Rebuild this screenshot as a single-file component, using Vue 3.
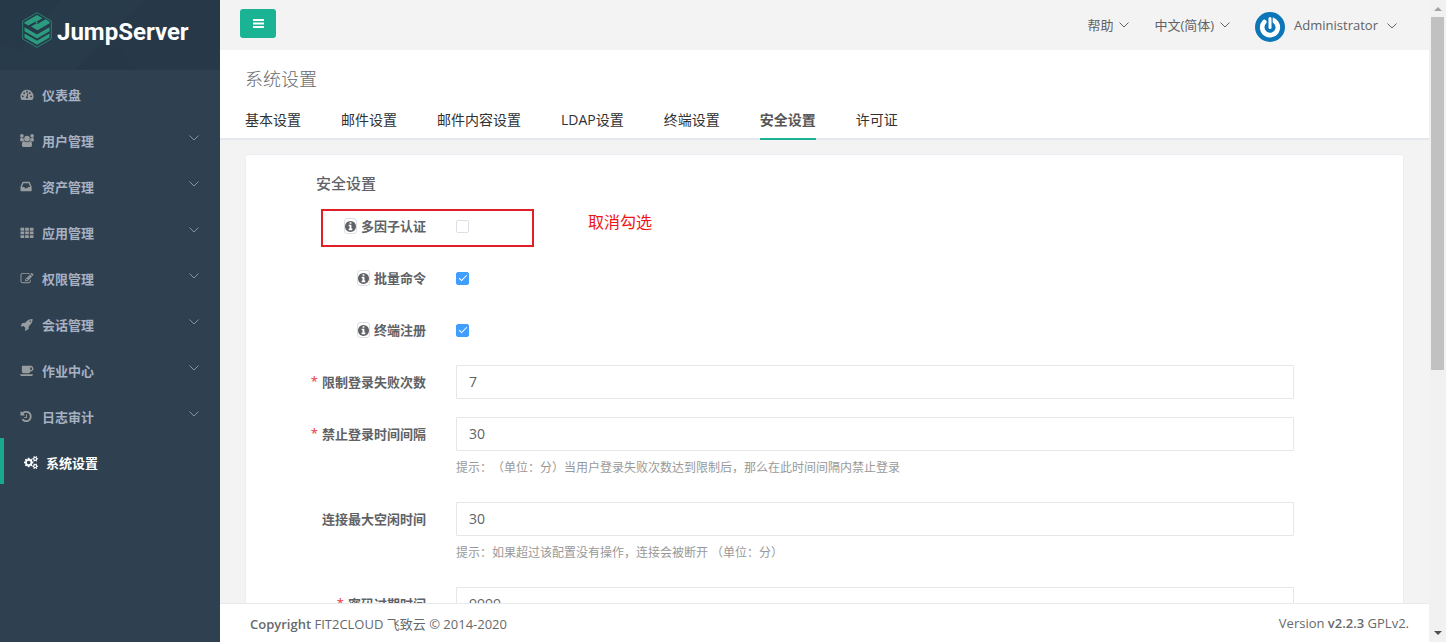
<script setup>
import { ref } from 'vue'

const icons = {
  dashboard: {
    box: '0 0 1792 1792',
    d: 'M896 256a896 896 0 0 0-758 1373q19 35 59 35h1398q40 0 59-35A896 896 0 0 0 896 256zM320 1024a128 128 0 1 1 0 256 128 128 0 0 1 0-256zM512 576a128 128 0 1 1 0 256 128 128 0 0 1 0-256zM896 384a128 128 0 1 1 0 256 128 128 0 0 1 0-256zM1280 576a128 128 0 1 1 0 256 128 128 0 0 1 0-256zM1472 1024a128 128 0 1 1 0 256 128 128 0 0 1 0-256zM1034 731q24 6 38 29t8 49l-101 382q60 45 60 125a150 150 0 1 1-183-158l101-382q7-26 29-39t48-6z'
  },
  users: {
    box: '0 0 1920 1792',
    d: 'M512 256a256 256 0 1 0-256 256 256 256 0 0 0 256-256zM1920 256a256 256 0 1 0-256 256 256 256 0 0 0 256-256zM1344 640a384 384 0 1 0-768 0 384 384 0 0 0 768 0zM593 896q-162 5-265 128H194Q0 1024 0 864q0-353 124-353 6 0 44 21t98 42 119 21 132-23q-5 37-5 66 0 139 81 258zM1664 1533q0 120-73 190t-194 69H523q-121 0-194-69t-73-190q0-500 283-560 13 0 42 21 150 158 379 158t379-158q29-21 42-21 283 60 283 560zM1920 864q0 160-194 160h-134q-103-123-265-128 81-119 81-258 0-29-5-66 66 23 132 23t119-21 98-42 44-21q124 0 124 353z'
  },
  inbox: {
    box: '128 0 1792 1792',
    d: 'M1151 960h316q-1-3-2.5-8.5t-2.5-7.5l-212-496h-708l-212 496q-1 3-2.5 8.5t-2.5 7.5h316l95 192h320zm513 30v482q0 26-19 45t-45 19h-1408q-26 0-45-19t-19-45v-482q0-62 25-123l238-552q10-25 36.5-42t52.5-17h832q26 0 52.5 17t36.5 42l238 552q25 61 25 123z'
  },
  grid: {
    box: '0 0 1792 1792',
    d: 'M0 256h512v384H0zM640 256h512v384H640zM1280 256h512v384h-512zM0 768h512v384H0zM640 768h512v384H640zM1280 768h512v384h-512zM0 1280h512v384H0zM640 1280h512v384H640zM1280 1280h512v384h-512z'
  },
  edit: {
    box: '0 0 1792 1792',
    d: 'M888 1184l116-116-152-152-116 116v56h96v96h56zm440-720q-16-16-33 1l-350 350q-17 17-1 33t33-1l350-350q17-17 1-33zm80 594v190q0 119-84.5 203.5t-203.5 84.5h-832q-119 0-203.5-84.5t-84.5-203.5v-832q0-119 84.5-203.5t203.5-84.5h832q63 0 117 25 15 7 18 23 3 17-9 29l-49 49q-14 14-32 8-23-6-45-6h-832q-66 0-113 47t-47 113v832q0 66 47 113t113 47h832q66 0 113-47t47-113v-126q0-13 9-22l64-64q15-15 35-7t20 29zm-96-738l288 288-672 672h-288v-288zm444 132l-92 92-288-288 92-92q28-28 68-28t68 28l152 152q28 28 28 68t-28 68z'
  },
  rocket: {
    box: '0 0 1792 1792',
    d: 'M1440 448q0-40-28-68t-68-28-68 28-28 68 28 68 68 28 68-28 28-68zm224-288q0 249-75.5 430.5t-253.5 360.5q-81 80-195 176l-20 379q-2 16-16 26l-384 224q-7 4-16 4-12 0-23-9l-64-64q-13-14-8-32l85-276-281-281-276 85q-3 1-9 1-14 0-23-9l-64-64q-17-19-5-39l224-384q10-14 26-16l379-20q96-114 176-195 188-187 358-258t431-71q14 0 24 9.5t10 22.5z'
  },
  coffee: {
    box: '0 0 1920 1792',
    d: 'M1664 640q0-80-56-136t-136-56h-64v384h64q80 0 136-56t56-136zM0 1408h1792q0 106-75 181t-181 75H256q-106 0-181-75T0 1408zM1856 640q0 159-112.5 271.5T1472 1024h-64v32q0 92-66 158t-158 66H480q-92 0-158-66t-66-158V320q0-26 19-45t45-19h1152q159 0 271.5 112.5T1856 640z'
  },
  history: {
    box: '128 0 1792 1792',
    d: 'M1664 896q0 156-61 298t-164 245-245 164-298 61q-172 0-327-72.5t-264-204.5q-7-10-6.5-22.5t8.5-20.5l137-138q10-9 25-9 16 2 23 12 73 95 179 147t225 52q104 0 198.5-40.5t163.5-109.5 109.5-163.5 40.5-198.5-40.5-198.5-109.5-163.5-163.5-109.5-198.5-40.5q-98 0-188 35.5t-160 101.5l137 138q31 30 14 69-17 40-59 40h-448q-26 0-45-19t-19-45v-448q0-42 40-59 39-17 69 14l130 129q107-101 244.5-156.5t284.5-55.5q156 0 298 61t245 164 164 245 61 298zm-640-288v448q0 14-9 23t-23 9h-320q-14 0-23-9t-9-23v-64q0-14 9-23t23-9h224v-352q0-14 9-23t23-9h64q14 0 23 9t9 23z'
  },
  cogs: {
    box: '0 0 1920 1792',
    d: 'M896 896q0-106-75-181t-181-75-181 75-75 181 75 181 181 75 181-75 75-181zm768 512q0-52-38-90t-90-38-90 38-38 90q0 53 37.5 90.5t90.5 37.5 90.5-37.5 37.5-90.5zm0-1024q0-52-38-90t-90-38-90 38-38 90q0 53 37.5 90.5t90.5 37.5 90.5-37.5 37.5-90.5zm-384 421v185q0 10-7 19.5t-16 10.5l-155 24q-11 35-32 76 34 48 90 115 7 11 7 20 0 12-7 19-23 30-82.5 89.5t-78.5 59.5q-11 0-21-7l-115-90q-37 19-77 31-11 108-23 155-7 24-30 24h-186q-11 0-20-7.5t-10-17.5l-23-153q-34-10-75-31l-118 89q-7 7-20 7-11 0-21-8-144-133-144-160 0-9 7-19 10-14 41-53t47-61q-23-44-35-82l-152-24q-10-1-17-9.5t-7-19.5v-185q0-10 7-19.5t16-10.5l155-24q11-35 32-76-34-48-90-115-7-11-7-20 0-12 7-20 22-30 82-89t79-59q11 0 21 7l115 90q34-18 77-32 11-108 23-154 7-24 30-24h186q11 0 20 7.5t10 17.5l23 153q34 10 75 31l118-89q8-7 20-7 11 0 21 8 144 133 144 160 0 8-7 19-12 16-42 54t-45 60q23 48 34 82l152 23q10 2 17 10.5t7 19.5zm640 533v140q0 16-149 31-12 27-30 52 51 113 51 138 0 4-4 7-122 71-124 71-8 0-46-47t-52-68q-20 2-30 2t-30-2q-14 21-52 68t-46 47q-2 0-124-71-4-3-4-7 0-25 51-138-18-25-30-52-149-15-149-31v-140q0-16 149-31 13-29 30-52-51-113-51-138 0-4 4-7 4-2 35-20t59-34 30-16q8 0 46 46.5t52 67.5q20-2 30-2t30 2q51-71 92-112l6-2q4 0 124 70 4 3 4 7 0 25-51 138 17 23 30 52 149 15 149 31zm0-1024v140q0 16-149 31-12 27-30 52 51 113 51 138 0 4-4 7-122 71-124 71-8 0-46-47t-52-68q-20 2-30 2t-30-2q-14 21-52 68t-46 47q-2 0-124-71-4-3-4-7 0-25 51-138-18-25-30-52-149-15-149-31v-140q0-16 149-31 13-29 30-52-51-113-51-138 0-4 4-7 4-2 35-20t59-34 30-16q8 0 46 46.5t52 67.5q20-2 30-2t30 2q51-71 92-112l6-2q4 0 124 70 4 3 4 7 0 25-51 138 17 23 30 52 149 15 149 31z'
  }
}

const menu = [
  { text: '仪表盘', icon: 'dashboard' },
  { text: '用户管理', icon: 'users', sub: true },
  { text: '资产管理', icon: 'inbox', sub: true },
  { text: '应用管理', icon: 'grid', sub: true },
  { text: '权限管理', icon: 'edit', sub: true },
  { text: '会话管理', icon: 'rocket', sub: true },
  { text: '作业中心', icon: 'coffee', sub: true },
  { text: '日志审计', icon: 'history', sub: true },
  { text: '系统设置', icon: 'cogs', active: true }
]

const tabs = ['基本设置', '邮件设置', '邮件内容设置', 'LDAP设置', '终端设置', '安全设置', '许可证']
const activeTab = ref('安全设置')

const fields = ref([
  { id: 'mfa', label: '多因子认证', type: 'check', value: false, marked: true },
  { id: 'batch', label: '批量命令', type: 'check', value: true },
  { id: 'register', label: '终端注册', type: 'check', value: true },
  { id: 'limit', label: '限制登录失败次数', type: 'text', value: '7', required: true },
  {
    id: 'interval', label: '禁止登录时间间隔', type: 'text', value: '30', required: true,
    help: '提示：（单位：分）当用户登录失败次数达到限制后，那么在此时间间隔内禁止登录'
  },
  {
    id: 'idle', label: '连接最大空闲时间', type: 'text', value: '30',
    help: '提示：如果超过该配置没有操作，连接会被断开 （单位：分）'
  },
  { id: 'expire', label: '密码过期时间', type: 'text', value: '9999', required: true }
])
</script>

<template>
  <div class="app">
    <aside class="sidebar">
      <a class="brand" href="#">
        <svg class="brand-bg" viewBox="0 0 220 70" preserveAspectRatio="none" aria-hidden="true">
          <path d="M0 0h220v70H0z" fill="#273949" />
          <path d="M0 0h145l-35 35 26 35H0z" fill="#283b4b" />
          <path d="M110 35l26 35H75z" fill="#263848" />
          <path d="M0 0h60L20 50 0 42z" fill="#263949" />
        </svg>
        <svg class="brand-mark" viewBox="0 0 30 36" aria-hidden="true">
          <path d="M15 .7L29.300 9v18L15 35.300.7 27V9z" fill="none" stroke="#27836f" stroke-width="1" />
          <path d="M2.500 10.200L15 3l5.500 3.200-7.500 4.300 2.500 1.400 8-4.600 4 2.400v1.500L15.500 18.200 9 14.500l7-4-2-1.200-7.500 4.300-4-2z" fill="#2b9c80" />
          <path d="M2.500 15.300L15 22.500l12.500-7.200v4L15 26.500 2.500 19.300z" fill="#2b9c80" />
          <path d="M2.500 21.600L15 28.800l12.500-7.200v4L15 32.800 2.500 25.600z" fill="#2b9c80" />
        </svg>
        <span class="brand-name">JumpServer</span>
      </a>
      <nav>
        <a v-for="m in menu" :key="m.text" href="#" class="menu-item" :class="{ active: m.active }">
          <svg class="menu-icon" :viewBox="icons[m.icon].box" aria-hidden="true">
            <path :d="icons[m.icon].d" fill="currentColor" fill-rule="evenodd" />
          </svg>
          <span class="menu-text">{{ m.text }}</span>
          <svg v-if="m.sub" class="menu-arrow" viewBox="0 0 10 6" aria-hidden="true">
            <path d="M.5.5L5 5 9.500.5" fill="none" stroke="currentColor" />
          </svg>
        </a>
      </nav>
    </aside>

    <div class="main">
      <header class="topbar">
        <button type="button" class="toggle" aria-label="Menu">
          <svg viewBox="0 0 11 9" aria-hidden="true">
            <path d="M0 0h11v2H0zM0 3.500h11v2H0zM0 7h11v2H0z" fill="#fff" />
          </svg>
        </button>
        <div class="top-links">
          <button type="button" class="drop lang">
            帮助
            <svg class="chev" viewBox="0 0 10 6" aria-hidden="true"><path d="M.5.5L5 5 9.500.5" fill="none" stroke="currentColor" /></svg>
          </button>
          <button type="button" class="drop lang">
            中文(简体)
            <svg class="chev" viewBox="0 0 10 6" aria-hidden="true"><path d="M.5.5L5 5 9.500.5" fill="none" stroke="currentColor" /></svg>
          </button>
          <button type="button" class="drop user">
            <svg class="avatar" viewBox="0 0 30 30" aria-hidden="true">
              <circle cx="15" cy="15" r="15" fill="#0c76b8" />
              <path d="M16 7.600A7.800 7.800 0 1 1 9.300 10" fill="none" stroke="#fff" stroke-width="4.600" stroke-linecap="round" />
              <path d="M15 5v11" stroke="#0c76b8" stroke-width="5.400" stroke-linecap="round" />
              <path d="M15 6.500v9" stroke="#fff" stroke-width="3" stroke-linecap="round" />
            </svg>
            <span>Administrator</span>
            <svg class="chev" viewBox="0 0 10 6" aria-hidden="true"><path d="M.5.5L5 5 9.500.5" fill="none" stroke="currentColor" /></svg>
          </button>
        </div>
      </header>

      <section class="heading">
        <h1>系统设置</h1>
        <div class="tabs" role="tablist">
          <button
            v-for="t in tabs" :key="t" type="button" role="tab" class="tab"
            :class="{ active: t === activeTab }" :aria-selected="t === activeTab" @click="activeTab = t"
          >{{ t }}</button>
        </div>
      </section>

      <main class="content">
        <form class="card" @submit.prevent>
          <h2>安全设置</h2>
          <div v-for="f in fields" :key="f.id" class="row">
            <label class="label" :for="f.id">
              <span v-if="f.required" class="star">*</span>
              <span v-if="f.type === 'check'" class="info">
                <svg viewBox="128 128 1536 1536" aria-hidden="true">
                  <path fill="currentColor" d="M1152 1376v-160q0-14-9-23t-23-9h-96v-512q0-14-9-23t-23-9h-320q-14 0-23 9t-9 23v160q0 14 9 23t23 9h96v320h-96q-14 0-23 9t-9 23v160q0 14 9 23t23 9h448q14 0 23-9t9-23zm-128-896v-160q0-14-9-23t-23-9h-192q-14 0-23 9t-9 23v160q0 14 9 23t23 9h192q14 0 23-9t9-23zm640 416q0 209-103 385.5t-279.5 279.5-385.5 103-385.5-103-279.5-279.5-103-385.5 103-385.5 279.5-279.5 385.5-103 385.5 103 279.5 279.5 103 385.5z" />
                </svg>
              </span>
              {{ f.label }}
            </label>
            <div class="control">
              <div v-if="f.type === 'check'" class="check-line">
                <input :id="f.id" v-model="f.value" type="checkbox" class="check">
              </div>
              <input v-else :id="f.id" v-model="f.value" type="text" class="input">
              <p v-if="f.help" class="help">{{ f.help }}</p>
            </div>
            <template v-if="f.marked">
              <div class="mark"></div>
              <span class="note">取消勾选</span>
            </template>
          </div>
        </form>
      </main>

      <footer class="footer">
        <span><strong>Copyright</strong> FIT2CLOUD 飞致云 © 2014-2020</span>
        <span>Version <strong>v2.2.3</strong> GPLv2.</span>
      </footer>
    </div>

    <div class="scrollbar" aria-hidden="true">
      <svg class="arrow up" viewBox="0 0 8 4"><path d="M0 4l4-4 4 4z" fill="#a3a3a3" /></svg>
      <div class="track"><div class="thumb"></div></div>
      <svg class="arrow" viewBox="0 0 8 4"><path d="M0 0l4 4 4-4z" fill="#505050" /></svg>
    </div>
  </div>
</template>

<style>
body {
  margin: 0;
}
</style>

<style scoped>
.app {
  display: flex;
  height: 100vh;
  overflow: hidden;
  background: #f3f3f3;
  color: #676a6c;
  font-family: "Open Sans", "Noto Sans CJK SC", sans-serif;
  font-size: 13px;
  text-spacing-trim: space-all;
}
.app *,
.app *::after {
  box-sizing: border-box;
}
button {
  border: 0;
  padding: 0;
  background: none;
  color: inherit;
  font: inherit;
  cursor: pointer;
}
a {
  color: inherit;
  text-decoration: none;
}

.sidebar {
  flex: none;
  width: 220px;
  background: #2f4050;
}
.brand {
  position: relative;
  display: flex;
  align-items: center;
  gap: 5px;
  height: 70px;
  padding: 0 22px 10px;
  color: #fff;
}
.brand-bg {
  position: absolute;
  inset: 0;
  width: 100%;
  height: 100%;
}
.brand-mark {
  position: relative;
  width: 30px;
  height: 36px;
}
.brand-name {
  position: relative;
  padding-top: 3px;
  font: bold 24px/30px Roboto, sans-serif;
}
.menu-item {
  display: flex;
  align-items: center;
  height: 46px;
  padding: 2px 21px 0 20px;
  color: #a7b1c2;
  font-weight: 600;
}
.menu-item.active {
  border-left: 4px solid #19aa8d;
  color: #fff;
}
.menu-icon {
  flex: none;
  width: 14px;
  height: 13px;
  margin-right: 8px;
  color: #999c9e;
}
.active .menu-icon {
  color: #fff;
}
.menu-text {
  flex: 1;
}
.menu-arrow {
  width: 10px;
  height: 6px;
  margin-bottom: 4px;
  color: #8593a2;
}

.main {
  display: flex;
  flex: 1;
  flex-direction: column;
  min-width: 0;
}
.topbar {
  display: flex;
  flex: none;
  justify-content: space-between;
  height: 50px;
  padding: 0 32px 0 20px;
}
.toggle {
  display: flex;
  align-items: center;
  justify-content: center;
  width: 36px;
  height: 29px;
  margin-top: 9px;
  border-radius: 3px;
  background: #1ab394;
}
.toggle svg {
  width: 11px;
  height: 9px;
}
.top-links {
  display: flex;
  gap: 25px;
}
.drop {
  display: flex;
  align-items: center;
  gap: 6px;
  color: #606266;
}
.lang {
  padding-bottom: 2px;
}
.user {
  gap: 9px;
}
.avatar {
  width: 30px;
  height: 30px;
  margin-top: 4px;
}
.chev {
  width: 10px;
  height: 6px;
  margin-top: 2px;
}

.heading {
  flex: none;
  height: 90px;
  padding: 16px 25px 0;
  border-bottom: 2px solid #e4e7ed;
  background: #fff;
}
h1 {
  margin: 0;
  font-size: 18px;
  font-weight: 300;
  line-height: 26px;
}
.tabs {
  display: flex;
  gap: 40px;
  margin-top: 8px;
}
.tab {
  height: 40px;
  border-bottom: 2px solid transparent;
  color: #303133;
  font-size: 14px;
}
.tab.active {
  border-color: #1ab394;
  color: #555;
  font-weight: 600;
}

.content {
  flex: 1;
  min-height: 0;
  padding: 14px 25px 0;
  overflow: hidden;
}
.card {
  padding: 15px 109px 20px 70px;
  border: 1px solid #ebeef5;
  border-radius: 3px;
  background: #fff;
}
h2 {
  margin: 0 0 13px;
  color: #606266;
  font-size: 15px;
  font-weight: 500;
  line-height: 26px;
}
.row {
  position: relative;
  display: flex;
  margin-bottom: 18px;
}
.label {
  display: flex;
  flex: none;
  align-items: center;
  justify-content: flex-end;
  gap: 4px;
  width: 140px;
  height: 34px;
  padding: 0 30px 2px 0;
  color: #606266;
  font-weight: 600;
  white-space: nowrap;
}
.star {
  color: #ed5565;
}
.info {
  display: flex;
  align-items: center;
  justify-content: center;
  width: 13px;
  height: 16px;
  margin-top: 2px;
  border: 1px solid #dcdfe6;
  border-radius: 3px;
}
.info svg {
  flex: none;
  width: 11px;
  height: 11px;
}
.control {
  flex: 1;
  min-width: 0;
}
.check-line {
  display: flex;
  align-items: center;
  height: 34px;
}
.check {
  display: grid;
  place-items: center;
  width: 13px;
  height: 13px;
  margin: 0;
  border: 1px solid #dcdfe6;
  border-radius: 2px;
  background: #fff;
  appearance: none;
}
.check:checked {
  border-color: #409eff;
  background: #409eff;
}
.check:checked::after {
  content: "";
  width: 4px;
  height: 8px;
  margin-bottom: 2px;
  border: solid #fff;
  border-width: 0 1px 1px 0;
  transform: rotate(45deg);
}
.input {
  display: block;
  width: 100%;
  height: 34px;
  padding: 0 12px 2px;
  border: 1px solid #e5e6e7;
  border-radius: 1px;
  background: #fff;
  color: #606266;
  font: inherit;
  font-size: 14px;
}
.help {
  margin: 0;
  color: #999;
  font-size: 12px;
  line-height: 33px;
}
.mark {
  position: absolute;
  top: 0;
  left: 5px;
  width: 213px;
  height: 38px;
  border: 2px solid #e01f26;
}
.note {
  position: absolute;
  top: 1px;
  left: 272px;
  color: #f01414;
  font-size: 16px;
  line-height: 24px;
}

.footer {
  display: flex;
  flex: none;
  align-items: center;
  justify-content: space-between;
  height: 39px;
  padding: 0 20px 0 30px;
  border-top: 1px solid #e7eaec;
  background: #fff;
}
strong {
  font-weight: 600;
}

.scrollbar {
  display: flex;
  flex: none;
  flex-direction: column;
  align-items: center;
  width: 17px;
  padding: 7px 0;
  background: #f1f1f1;
}
.arrow {
  width: 8px;
  height: 4px;
}
.track {
  flex: 1;
  width: 13px;
  padding: 6px 0;
}
.thumb {
  height: 58%;
  background: #c1c1c1;
}
</style>
